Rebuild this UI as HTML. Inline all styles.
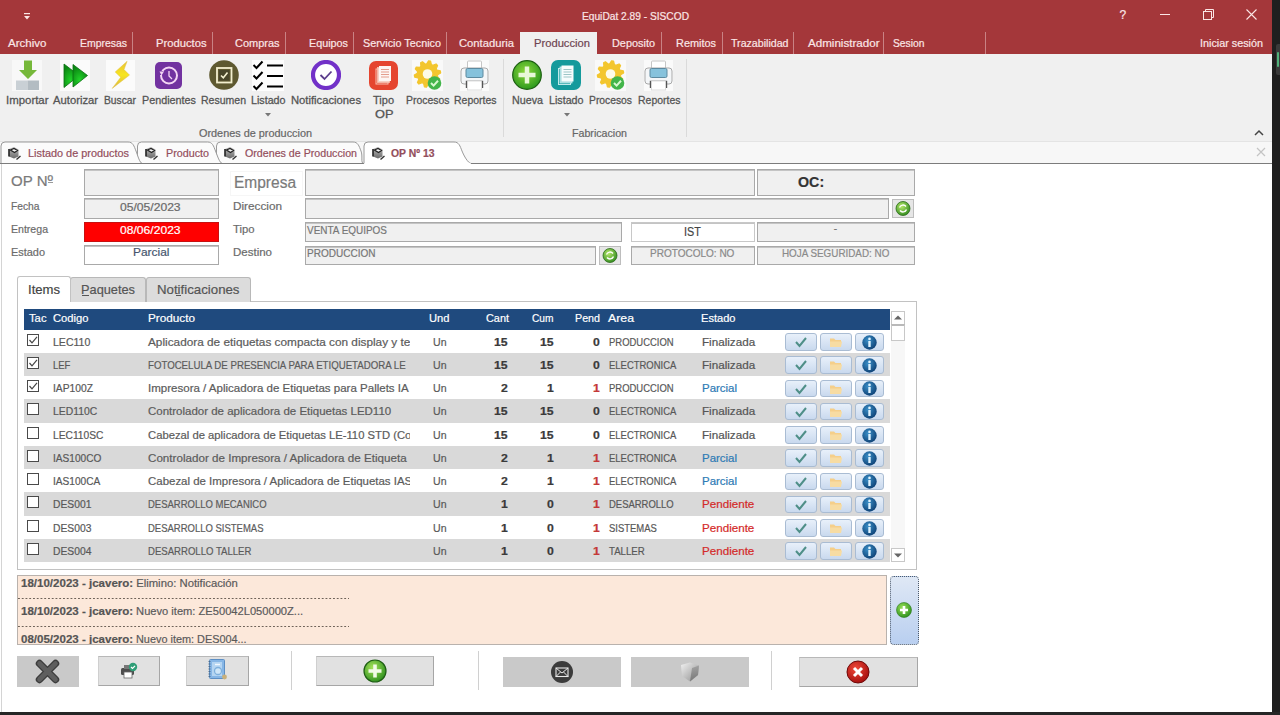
<!DOCTYPE html><html><head><meta charset="utf-8"><style>
*{margin:0;padding:0;box-sizing:border-box}
html,body{width:1280px;height:715px;overflow:hidden;background:#fff;font-family:"Liberation Sans",sans-serif}
.t{position:absolute;white-space:pre;line-height:1;-webkit-text-stroke-width:0.2px}
.a{position:absolute}
</style></head><body><div class="a" style="left:0px;top:0px;width:1272px;height:54px;background:#a4373a"></div>
<svg class="a" style="left:22px;top:11px" width="10" height="10" viewBox="0 0 10 10"><rect x="2" y="2" width="6" height="1.2" fill="#fbe6e6"/><path d="M2 5 L8 5 L5 8.5 Z" fill="#fbe6e6"/></svg>
<div class="t" style="left:582.00px;top:11.29px;font-size:11px;color:#fbe6e6;transform:scaleX(0.9260);transform-origin:0 0;">EquiDat 2.89 - SISCOD</div>
<div class="t" style="left:1119.50px;top:8.84px;font-size:12px;color:#fbe6e6;">?</div>
<div class="a" style="left:1160px;top:14px;width:10px;height:1px;background:#fbe6e6"></div>
<svg class="a" style="left:1203px;top:9px" width="11" height="11" viewBox="0 0 11 11"><rect x="0.5" y="2.5" width="8" height="8" fill="none" stroke="#fbe6e6" stroke-width="1"/><path d="M2.5 2.5 V0.5 H10.5 V8.5 H8.5" fill="none" stroke="#fbe6e6" stroke-width="1"/></svg>
<svg class="a" style="left:1246px;top:9px" width="11" height="11" viewBox="0 0 11 11"><path d="M0.5 0.5 L10.5 10.5 M10.5 0.5 L0.5 10.5" stroke="#fbe6e6" stroke-width="1.1"/></svg>
<div class="t" style="left:8.00px;top:38.27px;font-size:11.5px;color:#fbe6e6;transform:scaleX(1.0040);transform-origin:0 0;">Archivo</div>
<div class="t" style="left:80.00px;top:38.27px;font-size:11.5px;color:#fbe6e6;transform:scaleX(0.9079);transform-origin:0 0;">Empresas</div>
<div class="t" style="left:155.50px;top:38.27px;font-size:11.5px;color:#fbe6e6;transform:scaleX(0.9753);transform-origin:0 0;">Productos</div>
<div class="t" style="left:235.00px;top:38.27px;font-size:11.5px;color:#fbe6e6;transform:scaleX(0.9539);transform-origin:0 0;">Compras</div>
<div class="t" style="left:308.50px;top:38.27px;font-size:11.5px;color:#fbe6e6;transform:scaleX(0.9384);transform-origin:0 0;">Equipos</div>
<div class="t" style="left:362.50px;top:38.27px;font-size:11.5px;color:#fbe6e6;transform:scaleX(0.9411);transform-origin:0 0;">Servicio Tecnico</div>
<div class="t" style="left:458.50px;top:38.27px;font-size:11.5px;color:#fbe6e6;transform:scaleX(0.9776);transform-origin:0 0;">Contaduria</div>
<div class="t" style="left:611.50px;top:38.27px;font-size:11.5px;color:#fbe6e6;transform:scaleX(0.9474);transform-origin:0 0;">Deposito</div>
<div class="t" style="left:675.50px;top:38.27px;font-size:11.5px;color:#fbe6e6;transform:scaleX(0.9484);transform-origin:0 0;">Remitos</div>
<div class="t" style="left:730.50px;top:38.27px;font-size:11.5px;color:#fbe6e6;transform:scaleX(0.9242);transform-origin:0 0;">Trazabilidad</div>
<div class="t" style="left:807.50px;top:38.27px;font-size:11.5px;color:#fbe6e6;transform:scaleX(1.0078);transform-origin:0 0;">Administrador</div>
<div class="t" style="left:892.50px;top:38.27px;font-size:11.5px;color:#fbe6e6;transform:scaleX(0.8958);transform-origin:0 0;">Sesion</div>
<div class="t" style="left:1200.00px;top:38.27px;font-size:11.5px;color:#fbe6e6;transform:scaleX(0.9387);transform-origin:0 0;">Iniciar sesión</div>
<div class="a" style="left:132px;top:32px;width:1px;height:22px;background:#c98284"></div>
<div class="a" style="left:212px;top:32px;width:1px;height:22px;background:#c98284"></div>
<div class="a" style="left:285px;top:32px;width:1px;height:22px;background:#c98284"></div>
<div class="a" style="left:353px;top:32px;width:1px;height:22px;background:#c98284"></div>
<div class="a" style="left:446px;top:32px;width:1px;height:22px;background:#c98284"></div>
<div class="a" style="left:661px;top:32px;width:1px;height:22px;background:#c98284"></div>
<div class="a" style="left:722px;top:32px;width:1px;height:22px;background:#c98284"></div>
<div class="a" style="left:793px;top:32px;width:1px;height:22px;background:#c98284"></div>
<div class="a" style="left:883px;top:32px;width:1px;height:22px;background:#c98284"></div>
<div class="a" style="left:985px;top:32px;width:1px;height:22px;background:#c98284"></div>
<div class="a" style="left:520px;top:32px;width:77px;height:22px;background:#f0f0f0"></div>
<div class="t" style="left:534.00px;top:38.27px;font-size:11.5px;color:#6e4450;transform:scaleX(0.9733);transform-origin:0 0;">Produccion</div>
<div class="a" style="left:0px;top:54px;width:1272px;height:87px;background:#f0f0f0"></div>
<svg class="a" style="left:12px;top:60px" width="30" height="31" viewBox="0 0 30 31"><rect width="30" height="31" fill="#f8f8f8"/><path d="M12 0.5 H20 V10 H25 L16 19 L7 10 H12 Z" fill="#76b83a"/><rect x="4" y="20.5" width="11.5" height="9.5" fill="#c9d0d5"/><rect x="15.5" y="20.5" width="11.5" height="9.5" fill="#b3bcc2"/></svg>
<div class="t" style="left:5.50px;top:95.27px;font-size:11.5px;color:#555;transform:scaleX(0.9926);transform-origin:0 0;-webkit-text-stroke:0.3px #555">Importar</div>
<svg class="a" style="left:60px;top:60px" width="30" height="31" viewBox="0 0 30 31"><rect width="30" height="31" fill="#fbfbfb"/><defs><radialGradient id="ag" cx="0.45" cy="0.7" r="0.6"><stop offset="0" stop-color="#22d42a"/><stop offset="1" stop-color="#0c8a14"/></radialGradient></defs><path d="M4 4 L19 15.5 L4 27.5 Z" fill="url(#ag)" stroke="#0b6e12" stroke-width="0.8"/><path d="M13 4.5 L27.5 15.5 L13 27 Z" fill="url(#ag)" stroke="#0b6e12" stroke-width="0.8"/></svg>
<div class="t" style="left:53.00px;top:95.27px;font-size:11.5px;color:#555;transform:scaleX(0.9779);transform-origin:0 0;-webkit-text-stroke:0.3px #555">Autorizar</div>
<svg class="a" style="left:106px;top:60px" width="29" height="31" viewBox="0 0 29 31"><rect width="29" height="31" fill="#fbfbfb"/><defs><linearGradient id="bl" x1="0" y1="0" x2="0" y2="1"><stop offset="0" stop-color="#e9c23a"/><stop offset="0.5" stop-color="#f7e51e"/><stop offset="1" stop-color="#d9b445"/></linearGradient></defs><path d="M21.1 1.3 L9.2 12 L14.7 17.3 L6.2 28.4 L23.5 15.1 L18 9.6 Z" fill="url(#bl)" stroke="#e0c040" stroke-width="0.5"/></svg>
<div class="t" style="left:104.00px;top:95.27px;font-size:11.5px;color:#555;transform:scaleX(0.8941);transform-origin:0 0;-webkit-text-stroke:0.3px #555">Buscar</div>
<svg class="a" style="left:155px;top:62px" width="27" height="27" viewBox="0 0 27 27"><rect x="0" y="0" width="27" height="27" rx="5" fill="#7232a0"/><circle cx="14" cy="13.5" r="8" fill="none" stroke="#f4d6f4" stroke-width="2"/><path d="M14 9 L14 14 L17 17" fill="none" stroke="#f4d6f4" stroke-width="1.3"/><rect x="4" y="9" width="4" height="4" fill="#7232a0"/><path d="M4.5 9.5 L9 9.5 L6.5 13.5 Z" fill="#f4d6f4"/></svg>
<div class="t" style="left:142.00px;top:95.27px;font-size:11.5px;color:#555;transform:scaleX(0.9384);transform-origin:0 0;-webkit-text-stroke:0.3px #555">Pendientes</div>
<svg class="a" style="left:209px;top:60px" width="30" height="30" viewBox="0 0 30 30"><circle cx="15" cy="15" r="14.8" fill="#5e5930"/><rect x="8" y="8" width="14.5" height="14.5" fill="none" stroke="#f3efcf" stroke-width="1.8"/><rect x="10" y="10" width="10.5" height="10.5" fill="#48452a"/><path d="M12 15.5 L14.3 17.8 L18.5 12.5" fill="none" stroke="#f3efcf" stroke-width="1.6"/></svg>
<div class="t" style="left:200.50px;top:95.27px;font-size:11.5px;color:#555;transform:scaleX(0.9143);transform-origin:0 0;-webkit-text-stroke:0.3px #555">Resumen</div>
<svg class="a" style="left:252px;top:60px" width="32" height="31" viewBox="0 0 32 31"><rect width="32" height="31" fill="#fdfdfd"/><path d="M1.5 5 L4.5 8 L10.5 1.5 M1.5 15.5 L4.5 18.5 L10.5 12 M1.5 26 L4.5 29 L10.5 22.5" fill="none" stroke="#000" stroke-width="2"/><rect x="15" y="4.5" width="16" height="2" fill="#000"/><rect x="15" y="15" width="16" height="2" fill="#000"/><rect x="15" y="25.5" width="16" height="2" fill="#000"/></svg>
<div class="t" style="left:251.00px;top:95.27px;font-size:11.5px;color:#555;transform:scaleX(0.9303);transform-origin:0 0;-webkit-text-stroke:0.3px #555">Listado</div>
<svg class="a" style="left:265px;top:113px" width="6" height="4" viewBox="0 0 6 4"><path d="M0 0 H6 L3 3.5 Z" fill="#777"/></svg>
<svg class="a" style="left:311px;top:60px" width="30" height="30" viewBox="0 0 30 30"><circle cx="15" cy="15" r="13" fill="#fff" stroke="#7231c8" stroke-width="4.2"/><path d="M9.5 15 L13.5 19 L20.5 11.5" fill="none" stroke="#5b3d8c" stroke-width="1.8"/></svg>
<div class="t" style="left:291.00px;top:95.27px;font-size:11.5px;color:#555;transform:scaleX(0.9778);transform-origin:0 0;-webkit-text-stroke:0.3px #555">Notificaciones</div>
<svg class="a" style="left:369px;top:61px" width="29" height="29" viewBox="0 0 29 29"><rect width="29" height="29" rx="7" fill="#e5452f"/><rect x="7" y="8" width="12" height="15" fill="none" stroke="#f7c0b0" stroke-width="1"/><rect x="8.5" y="6.5" width="12" height="15" fill="#f6d0c4" stroke="#f7c0b0" stroke-width="0.8"/><rect x="10" y="5" width="12" height="15" fill="#fdf6f3"/><path d="M12 8.5 h8 M12 11 h8 M12 13.5 h8 M12 16 h8" stroke="#e49d8c" stroke-width="1"/></svg>
<div class="t" style="left:373.00px;top:95.27px;font-size:11.5px;color:#555;transform:scaleX(0.9570);transform-origin:0 0;-webkit-text-stroke:0.3px #555">Tipo</div>
<div class="t" style="left:374.50px;top:109.27px;font-size:11.5px;color:#555;transform:scaleX(1.1134);transform-origin:0 0;-webkit-text-stroke:0.3px #555">OP</div>
<svg class="a" style="left:412px;top:60px" width="31" height="31" viewBox="0 0 31 31"><rect width="31" height="31" fill="#f9f9f9"/><polygon points="14.70,3.83 16.54,0.84 18.58,1.16 19.40,4.58 20.83,5.30 24.07,3.96 25.54,5.43 24.20,8.67 24.92,10.10 28.34,10.92 28.66,12.96 25.67,14.80 25.42,16.38 27.70,19.05 26.75,20.90 23.26,20.62 22.12,21.76 22.40,25.25 20.55,26.20 17.88,23.92 16.30,24.17 14.46,27.16 12.42,26.84 11.60,23.42 10.17,22.70 6.93,24.04 5.46,22.57 6.80,19.33 6.08,17.90 2.66,17.08 2.34,15.04 5.33,13.20 5.58,11.62 3.30,8.95 4.25,7.10 7.74,7.38 8.88,6.24 8.60,2.75 10.45,1.80 13.12,4.08" fill="#f3c62e" stroke="#f3c62e" stroke-width="1.2" stroke-linejoin="round"/><circle cx="15.5" cy="14" r="4.8" fill="#fdfbe8"/><circle cx="22.5" cy="23" r="6.8" fill="#43b54a"/><path d="M19 23 L21.6 25.6 L26 20.8" fill="none" stroke="#d8f8d0" stroke-width="2"/></svg>
<div class="t" style="left:405.50px;top:95.27px;font-size:11.5px;color:#555;transform:scaleX(0.9074);transform-origin:0 0;-webkit-text-stroke:0.3px #555">Procesos</div>
<svg class="a" style="left:460px;top:60px" width="29" height="31" viewBox="0 0 29 31"><rect width="29" height="31" fill="#fafafa"/><rect x="7.5" y="1" width="14" height="9" rx="1" fill="#fff" stroke="#c6c6c6" stroke-width="1"/><rect x="1" y="8" width="27" height="16" rx="3" fill="#f4f6f8" stroke="#a9a9a9" stroke-width="1"/><rect x="6" y="8.5" width="17" height="9" rx="1.5" fill="#86c2dc" stroke="#5d8aa0" stroke-width="1"/><path d="M6.5 28 V21.5 H22.5 V28" fill="none" stroke="#555" stroke-width="1.4"/><rect x="7.5" y="21" width="14" height="9" fill="#fff" stroke="#d4d4d4" stroke-width="0.8"/></svg>
<div class="t" style="left:454.00px;top:95.27px;font-size:11.5px;color:#555;transform:scaleX(0.9108);transform-origin:0 0;-webkit-text-stroke:0.3px #555">Reportes</div>
<div class="a" style="left:503px;top:59px;width:1px;height:78px;background:#dadada"></div>
<div class="t" style="left:199.00px;top:128.19px;font-size:11px;color:#666;transform:scaleX(0.9882);transform-origin:0 0;">Ordenes de produccion</div>
<svg class="a" style="left:512px;top:60px" width="30" height="30" viewBox="0 0 30 30"><defs><radialGradient id="gn" cx="0.45" cy="0.4" r="0.6"><stop offset="0" stop-color="#8ed83b"/><stop offset="1" stop-color="#2e9a1e"/></radialGradient></defs><circle cx="15" cy="15" r="14.3" fill="url(#gn)" stroke="#1c5e10" stroke-width="1.2"/><path d="M15 6.5 V23.5 M6.5 15 H23.5" stroke="#e8f8d8" stroke-width="4.5"/></svg>
<div class="t" style="left:511.50px;top:95.27px;font-size:11.5px;color:#555;transform:scaleX(0.9325);transform-origin:0 0;-webkit-text-stroke:0.3px #555">Nueva</div>
<svg class="a" style="left:551px;top:60px" width="30" height="30" viewBox="0 0 30 30"><rect width="30" height="30" rx="7" fill="#149a9c"/><rect x="7.5" y="8.5" width="12" height="16" fill="none" stroke="#bfe9ea" stroke-width="1"/><rect x="9" y="7" width="12" height="16" fill="#9fd9da" stroke="#bfe9ea" stroke-width="0.8"/><rect x="10.5" y="5.5" width="12" height="16" fill="#f6fcfc"/><path d="M12.5 9.5 h8 M12.5 12 h8 M12.5 14.5 h8 M12.5 17 h8" stroke="#9cc5c6" stroke-width="1"/></svg>
<div class="t" style="left:549.00px;top:95.27px;font-size:11.5px;color:#555;transform:scaleX(0.9303);transform-origin:0 0;-webkit-text-stroke:0.3px #555">Listado</div>
<svg class="a" style="left:564px;top:113px" width="6" height="4" viewBox="0 0 6 4"><path d="M0 0 H6 L3 3.5 Z" fill="#777"/></svg>
<svg class="a" style="left:595px;top:60px" width="31" height="31" viewBox="0 0 31 31"><rect width="31" height="31" fill="#f9f9f9"/><polygon points="14.70,3.83 16.54,0.84 18.58,1.16 19.40,4.58 20.83,5.30 24.07,3.96 25.54,5.43 24.20,8.67 24.92,10.10 28.34,10.92 28.66,12.96 25.67,14.80 25.42,16.38 27.70,19.05 26.75,20.90 23.26,20.62 22.12,21.76 22.40,25.25 20.55,26.20 17.88,23.92 16.30,24.17 14.46,27.16 12.42,26.84 11.60,23.42 10.17,22.70 6.93,24.04 5.46,22.57 6.80,19.33 6.08,17.90 2.66,17.08 2.34,15.04 5.33,13.20 5.58,11.62 3.30,8.95 4.25,7.10 7.74,7.38 8.88,6.24 8.60,2.75 10.45,1.80 13.12,4.08" fill="#f3c62e" stroke="#f3c62e" stroke-width="1.2" stroke-linejoin="round"/><circle cx="15.5" cy="14" r="4.8" fill="#fdfbe8"/><circle cx="22.5" cy="23" r="6.8" fill="#43b54a"/><path d="M19 23 L21.6 25.6 L26 20.8" fill="none" stroke="#d8f8d0" stroke-width="2"/></svg>
<div class="t" style="left:589.00px;top:95.27px;font-size:11.5px;color:#555;transform:scaleX(0.8970);transform-origin:0 0;-webkit-text-stroke:0.3px #555">Procesos</div>
<svg class="a" style="left:644px;top:60px" width="29" height="31" viewBox="0 0 29 31"><rect width="29" height="31" fill="#fafafa"/><rect x="7.5" y="1" width="14" height="9" rx="1" fill="#fff" stroke="#c6c6c6" stroke-width="1"/><rect x="1" y="8" width="27" height="16" rx="3" fill="#f4f6f8" stroke="#a9a9a9" stroke-width="1"/><rect x="6" y="8.5" width="17" height="9" rx="1.5" fill="#86c2dc" stroke="#5d8aa0" stroke-width="1"/><path d="M6.5 28 V21.5 H22.5 V28" fill="none" stroke="#555" stroke-width="1.4"/><rect x="7.5" y="21" width="14" height="9" fill="#fff" stroke="#d4d4d4" stroke-width="0.8"/></svg>
<div class="t" style="left:637.50px;top:95.27px;font-size:11.5px;color:#555;transform:scaleX(0.9108);transform-origin:0 0;-webkit-text-stroke:0.3px #555">Reportes</div>
<div class="a" style="left:686px;top:59px;width:1px;height:78px;background:#dadada"></div>
<div class="t" style="left:572.00px;top:128.19px;font-size:11px;color:#666;transform:scaleX(0.9673);transform-origin:0 0;">Fabricacion</div>
<svg class="a" style="left:1254px;top:129px" width="10" height="7" viewBox="0 0 10 7"><path d="M1 6 L5 2 L9 6" fill="none" stroke="#444" stroke-width="1.5"/></svg>
<div class="a" style="left:0px;top:141px;width:1272px;height:22px;background:#f7f7f7;border-top:1px solid #e4e4e4"></div>
<div class="a" style="left:0px;top:163px;width:1272px;height:549px;background:#fff"></div>
<div class="a" style="left:1px;top:163px;width:1px;height:549px;background:#d4d4d4"></div>
<svg class="a" style="left:0px;top:0px" width="1272" height="170" viewBox="0 0 1272 170"><path d="M216.5 163.5 V146 Q216.5 142 220.5 142 H353 C358 142 359 146 361 151 S360.5 163 363.5 163.5 Z" fill="#fbfbfb" stroke="#9a9a9a" stroke-width="1"/><path d="M137.5 163.5 V146 Q137.5 142 141.5 142 H207.5 C212.5 142 213.5 146 215.5 151 S219.5 163 222.5 163.5 Z" fill="#fbfbfb" stroke="#9a9a9a" stroke-width="1"/><path d="M1 163.5 V146 Q1 142 5 142 H128 C133 142 134 146 136 151 S139.5 163 142.5 163.5 Z" fill="#fbfbfb" stroke="#9a9a9a" stroke-width="1"/><path d="M0 163.5 H364 M471 163.5 H1272" stroke="#7c7c7c" stroke-width="1.2"/><path d="M364 163.5 V146 Q364 142 368 142 H454 C459 142 460 146 462 151 S468 163 471 163.5" fill="#ffffff" stroke="#9a9a9a" stroke-width="1"/><rect x="364.6" y="163" width="106" height="2" fill="#fff"/></svg>
<svg class="a" style="left:8px;top:145.5px" width="14" height="15" viewBox="0 0 14 15"><defs><linearGradient id="dg" x1="0" y1="0" x2="0" y2="1"><stop offset="0" stop-color="#bdbdbd"/><stop offset="1" stop-color="#6a6a6a"/></linearGradient></defs><path d="M1 3 L6 1 L10.5 3.5 V10.5 L6 12.5 L1 10.5 Z" fill="url(#dg)"/><path d="M1 3 V10.5" stroke="#222" stroke-width="1.6"/><path d="M2.5 4 L6 2.5 L9.5 4.5 L6.5 6.5 Z" fill="#f4f4f4" stroke="#222" stroke-width="1.2"/><path d="M8.5 13.5 L12.5 10" stroke="#333" stroke-width="1.4"/></svg>
<div class="t" style="left:28.00px;top:147.69px;font-size:11px;color:#934e5c;transform:scaleX(0.9890);transform-origin:0 0;">Listado de productos</div>
<svg class="a" style="left:145px;top:145.5px" width="14" height="15" viewBox="0 0 14 15"><defs><linearGradient id="dg" x1="0" y1="0" x2="0" y2="1"><stop offset="0" stop-color="#bdbdbd"/><stop offset="1" stop-color="#6a6a6a"/></linearGradient></defs><path d="M1 3 L6 1 L10.5 3.5 V10.5 L6 12.5 L1 10.5 Z" fill="url(#dg)"/><path d="M1 3 V10.5" stroke="#222" stroke-width="1.6"/><path d="M2.5 4 L6 2.5 L9.5 4.5 L6.5 6.5 Z" fill="#f4f4f4" stroke="#222" stroke-width="1.2"/><path d="M8.5 13.5 L12.5 10" stroke="#333" stroke-width="1.4"/></svg>
<div class="t" style="left:165.50px;top:147.69px;font-size:11px;color:#934e5c;transform:scaleX(0.9767);transform-origin:0 0;">Producto</div>
<svg class="a" style="left:224px;top:145.5px" width="14" height="15" viewBox="0 0 14 15"><defs><linearGradient id="dg" x1="0" y1="0" x2="0" y2="1"><stop offset="0" stop-color="#bdbdbd"/><stop offset="1" stop-color="#6a6a6a"/></linearGradient></defs><path d="M1 3 L6 1 L10.5 3.5 V10.5 L6 12.5 L1 10.5 Z" fill="url(#dg)"/><path d="M1 3 V10.5" stroke="#222" stroke-width="1.6"/><path d="M2.5 4 L6 2.5 L9.5 4.5 L6.5 6.5 Z" fill="#f4f4f4" stroke="#222" stroke-width="1.2"/><path d="M8.5 13.5 L12.5 10" stroke="#333" stroke-width="1.4"/></svg>
<div class="t" style="left:244.50px;top:147.69px;font-size:11px;color:#934e5c;transform:scaleX(0.9691);transform-origin:0 0;">Ordenes de Produccion</div>
<svg class="a" style="left:372px;top:145.5px" width="14" height="15" viewBox="0 0 14 15"><defs><linearGradient id="dg" x1="0" y1="0" x2="0" y2="1"><stop offset="0" stop-color="#bdbdbd"/><stop offset="1" stop-color="#6a6a6a"/></linearGradient></defs><path d="M1 3 L6 1 L10.5 3.5 V10.5 L6 12.5 L1 10.5 Z" fill="url(#dg)"/><path d="M1 3 V10.5" stroke="#222" stroke-width="1.6"/><path d="M2.5 4 L6 2.5 L9.5 4.5 L6.5 6.5 Z" fill="#f4f4f4" stroke="#222" stroke-width="1.2"/><path d="M8.5 13.5 L12.5 10" stroke="#333" stroke-width="1.4"/></svg>
<div class="t" style="left:391.00px;top:147.69px;font-size:11px;color:#934e5c;font-weight:bold;transform:scaleX(0.9456);transform-origin:0 0;">OP Nº 13</div>
<svg class="a" style="left:1256px;top:147px" width="10" height="10" viewBox="0 0 10 10"><path d="M1 1 L9 9 M9 1 L1 9" stroke="#c4c4c4" stroke-width="1.2"/></svg>
<div class="t" style="left:11.00px;top:173.30px;font-size:15px;color:#7a7a7a;transform:scaleX(1.0029);transform-origin:0 0;">OP Nº</div>
<div class="a" style="left:48px;top:182px;width:5px;height:1.3px;background:#9a9a9a"></div>
<div class="a" style="left:84px;top:169px;width:135px;height:26.5px;background:#f0f0f0;border:1px solid #a9a9a9;box-shadow:inset 0 1px 0 #c4c4c4"></div>
<div class="t" style="left:11.00px;top:200.69px;font-size:11px;color:#6b6b6b;transform:scaleX(0.9322);transform-origin:0 0;">Fecha</div>
<div class="a" style="left:84px;top:198px;width:135px;height:21px;background:#f0f0f0;border:1px solid #a9a9a9;box-shadow:inset 0 1px 0 #c4c4c4"></div>
<div class="t" style="left:120.40px;top:201.69px;font-size:11px;color:#6a6a6a;transform:scaleX(1.1007);transform-origin:0 0;">05/05/2023</div>
<div class="t" style="left:11.00px;top:223.69px;font-size:11px;color:#6b6b6b;transform:scaleX(0.9604);transform-origin:0 0;">Entrega</div>
<div class="a" style="left:84px;top:222px;width:135px;height:20px;background:#f00;border:1px solid #c81010"></div>
<div class="t" style="left:120.40px;top:224.89px;font-size:11px;color:#fff;transform:scaleX(1.1007);transform-origin:0 0;">08/06/2023</div>
<div class="t" style="left:11.00px;top:247.19px;font-size:11px;color:#6b6b6b;transform:scaleX(0.9928);transform-origin:0 0;">Estado</div>
<div class="a" style="left:84px;top:245px;width:135px;height:20px;background:#fff;border:1px solid #a9a9a9;box-shadow:inset 0 1px 0 #c4c4c4"></div>
<div class="t" style="left:132.80px;top:247.27px;font-size:11.5px;color:#46566e;transform:scaleX(1.0384);transform-origin:0 0;">Parcial</div>
<div class="a" style="left:230px;top:171px;width:73px;height:25px;border:1px solid #f6f6f6"></div>
<div class="t" style="left:233.50px;top:174.96px;font-size:16px;color:#7a7a7a;transform:scaleX(0.9684);transform-origin:0 0;">Empresa</div>
<div class="a" style="left:305px;top:169px;width:450px;height:26.5px;background:#f0f0f0;border:1px solid #a9a9a9;box-shadow:inset 0 1px 0 #c4c4c4"></div>
<div class="a" style="left:757px;top:169px;width:158px;height:26.5px;background:#f0f0f0;border:1px solid #a9a9a9;box-shadow:inset 0 1px 0 #c4c4c4"></div>
<div class="t" style="left:797.94px;top:174.30px;font-size:15px;color:#333;font-weight:bold;transform:scaleX(0.9500);transform-origin:0 0;">OC:</div>
<div class="t" style="left:232.50px;top:200.69px;font-size:11px;color:#6b6b6b;transform:scaleX(1.0687);transform-origin:0 0;">Direccion</div>
<div class="a" style="left:305px;top:198px;width:584px;height:20.5px;background:#f0f0f0;border:1px solid #a9a9a9;box-shadow:inset 0 1px 0 #c4c4c4"></div>
<div class="t" style="left:232.50px;top:223.69px;font-size:11px;color:#6b6b6b;transform:scaleX(1.0243);transform-origin:0 0;">Tipo</div>
<div class="a" style="left:305px;top:222px;width:317px;height:20px;background:#f0f0f0;border:1px solid #a9a9a9;box-shadow:inset 0 1px 0 #c4c4c4"></div>
<div class="t" style="left:306.50px;top:224.61px;font-size:10.5px;color:#777;transform:scaleX(0.9477);transform-origin:0 0;">VENTA EQUIPOS</div>
<div class="a" style="left:631px;top:222px;width:123.5px;height:19.5px;background:#fff;border:1px solid #c8c8c8;box-shadow:inset 0 1px 0 #c4c4c4"></div>
<div class="t" style="left:684.10px;top:225.84px;font-size:12px;color:#444;transform:scaleX(0.9000);transform-origin:0 0;">IST</div>
<div class="a" style="left:757px;top:222px;width:158px;height:20px;background:#f0f0f0;border:1px solid #a9a9a9;box-shadow:inset 0 1px 0 #c4c4c4"></div>
<div class="t" style="left:833.83px;top:223.53px;font-size:10px;color:#777;transform:scaleX(1.0000);transform-origin:0 0;">-</div>
<div class="t" style="left:232.50px;top:247.19px;font-size:11px;color:#6b6b6b;transform:scaleX(1.0457);transform-origin:0 0;">Destino</div>
<div class="a" style="left:305px;top:245.5px;width:290.5px;height:19.5px;background:#f0f0f0;border:1px solid #a9a9a9;box-shadow:inset 0 1px 0 #c4c4c4"></div>
<div class="t" style="left:306.50px;top:248.11px;font-size:10.5px;color:#777;transform:scaleX(0.9547);transform-origin:0 0;">PRODUCCION</div>
<div class="a" style="left:631px;top:245.5px;width:123.5px;height:19.5px;background:#f0f0f0;border:1px solid #a9a9a9;box-shadow:inset 0 1px 0 #c4c4c4"></div>
<div class="t" style="left:650.30px;top:247.61px;font-size:10.5px;color:#8a8a8a;transform:scaleX(0.9538);transform-origin:0 0;">PROTOCOLO: NO</div>
<div class="a" style="left:757px;top:245.5px;width:158px;height:19.5px;background:#f0f0f0;border:1px solid #a9a9a9;box-shadow:inset 0 1px 0 #c4c4c4"></div>
<div class="t" style="left:782.00px;top:247.61px;font-size:10.5px;color:#8a8a8a;transform:scaleX(0.9383);transform-origin:0 0;">HOJA SEGURIDAD: NO</div>
<svg class="a" style="left:892px;top:199px" width="22" height="19" viewBox="0 0 22 19"><rect x="0.5" y="0.5" width="21" height="18" fill="#e6e6e6" stroke="#bdbdbd"/><defs><radialGradient id="rg" cx="0.4" cy="0.35" r="0.7"><stop offset="0" stop-color="#b6e86a"/><stop offset="1" stop-color="#2f8a1e"/></radialGradient></defs><circle cx="11" cy="9.5" r="7" fill="url(#rg)" stroke="#2b6b1a" stroke-width="0.8"/><path d="M7.5 8.5 A3.8 3.8 0 0 1 14 7.5 M14.5 10.5 A3.8 3.8 0 0 1 8 11.5" fill="none" stroke="#fff" stroke-width="1.4"/></svg>
<svg class="a" style="left:599px;top:246px" width="22" height="19" viewBox="0 0 22 19"><rect x="0.5" y="0.5" width="21" height="18" fill="#e6e6e6" stroke="#bdbdbd"/><defs><radialGradient id="rg" cx="0.4" cy="0.35" r="0.7"><stop offset="0" stop-color="#b6e86a"/><stop offset="1" stop-color="#2f8a1e"/></radialGradient></defs><circle cx="11" cy="9.5" r="7" fill="url(#rg)" stroke="#2b6b1a" stroke-width="0.8"/><path d="M7.5 8.5 A3.8 3.8 0 0 1 14 7.5 M14.5 10.5 A3.8 3.8 0 0 1 8 11.5" fill="none" stroke="#fff" stroke-width="1.4"/></svg>
<div class="a" style="left:16.5px;top:301px;width:900.5px;height:268.5px;border:1px solid #c2c2c2;background:#fff"></div>
<div class="a" style="left:70px;top:277px;width:76px;height:25px;background:#dcdcdc;border:1px solid #b8b8b8;border-bottom:none;border-radius:3px 3px 0 0"></div>
<div class="a" style="left:146px;top:277px;width:105px;height:25px;background:#dcdcdc;border:1px solid #b8b8b8;border-bottom:none;border-radius:3px 3px 0 0"></div>
<div class="a" style="left:16.5px;top:276px;width:54px;height:26px;background:#fff;border:1px solid #c2c2c2;border-bottom:none;border-radius:3px 3px 0 0"></div>
<div class="t" style="left:27.50px;top:282.50px;font-size:13px;color:#444;transform:scaleX(1.0068);transform-origin:0 0;">Items</div>
<div class="t" style="left:81.00px;top:283.00px;font-size:13px;color:#555;transform:scaleX(0.9830);transform-origin:0 0;">Paquetes</div>
<div class="a" style="left:81.5px;top:294.8px;width:7.5px;height:1px;background:#555"></div>
<div class="t" style="left:157.00px;top:283.00px;font-size:13px;color:#555;transform:scaleX(1.0194);transform-origin:0 0;">Notificaciones</div>
<div class="a" style="left:176px;top:294.8px;width:4.5px;height:1px;background:#555"></div>
<div class="a" style="left:24px;top:309px;width:866px;height:20.5px;background:#1f4a7e"></div>
<div class="t" style="left:29.00px;top:312.77px;font-size:11.5px;color:#ffffff;transform:scaleX(0.9779);transform-origin:0 0;">Tac</div>
<div class="t" style="left:52.50px;top:312.77px;font-size:11.5px;color:#ffffff;transform:scaleX(0.9741);transform-origin:0 0;">Codigo</div>
<div class="t" style="left:147.50px;top:312.77px;font-size:11.5px;color:#ffffff;transform:scaleX(1.0211);transform-origin:0 0;">Producto</div>
<div class="t" style="left:428.50px;top:312.77px;font-size:11.5px;color:#ffffff;transform:scaleX(0.9717);transform-origin:0 0;">Und</div>
<div class="t" style="left:485.50px;top:312.77px;font-size:11.5px;color:#ffffff;transform:scaleX(0.9468);transform-origin:0 0;">Cant</div>
<div class="t" style="left:532.00px;top:312.77px;font-size:11.5px;color:#ffffff;transform:scaleX(0.8855);transform-origin:0 0;">Cum</div>
<div class="t" style="left:575.00px;top:312.77px;font-size:11.5px;color:#ffffff;transform:scaleX(0.9308);transform-origin:0 0;">Pend</div>
<div class="t" style="left:607.50px;top:312.77px;font-size:11.5px;color:#ffffff;transform:scaleX(1.0703);transform-origin:0 0;">Area</div>
<div class="t" style="left:700.50px;top:312.77px;font-size:11.5px;color:#ffffff;transform:scaleX(0.9636);transform-origin:0 0;">Estado</div>
<div class="a" style="left:0;top:0;width:1280px;height:715px;overflow:hidden">
<div class="a" style="left:27px;top:333.5px;width:12px;height:12px;border:1.3px solid #4a4a4a;background:#fff"></div>
<svg class="a" style="left:28px;top:334.5px" width="10" height="10" viewBox="0 0 10 10"><path d="M1.5 5 L4 7.8 L9 1.8" fill="none" stroke="#444" stroke-width="1.2"/></svg>
<div class="t" style="left:53.00px;top:336.70px;font-size:10.75px;color:#585858;transform:scaleX(0.9804);transform-origin:0 0;">LEC110</div>
<div class="a" style="left:147px;top:329.50px;width:263px;height:23.25px;overflow:hidden">
<div class="t" style="left:1px;top:7.20px;font-size:10.75px;color:#5c5c5c;transform:scaleX(1.0975);transform-origin:0 0">Aplicadora de etiquetas compacta con display y tec</div>
</div>
<div class="t" style="left:432.50px;top:336.70px;font-size:10.75px;color:#585858;transform:scaleX(0.9824);transform-origin:0 0;">Un</div>
<div class="t" style="left:494.39px;top:336.70px;font-size:10.75px;color:#3a3a3a;font-weight:bold;transform:scaleX(1.1383);transform-origin:0 0;">15</div>
<div class="t" style="left:539.89px;top:336.70px;font-size:10.75px;color:#3a3a3a;font-weight:bold;transform:scaleX(1.1383);transform-origin:0 0;">15</div>
<div class="t" style="left:592.69px;top:336.70px;font-size:10.75px;color:#3a3a3a;font-weight:bold;transform:scaleX(1.1383);transform-origin:0 0;">0</div>
<div class="t" style="left:608.50px;top:336.70px;font-size:10.75px;color:#585858;transform:scaleX(0.8800);transform-origin:0 0;">PRODUCCION</div>
<div class="t" style="left:702.00px;top:336.70px;font-size:10.75px;color:#555;transform:scaleX(1.0838);transform-origin:0 0;">Finalizada</div>
<div class="a" style="left:784.5px;top:333.0px;width:32.0px;height:17.5px;border:1px solid #a9bcd3;border-radius:3px;background:linear-gradient(#e8f0fa,#c9d9ee)"></div>
<div class="a" style="left:820px;top:333.0px;width:32px;height:17.5px;border:1px solid #a9bcd3;border-radius:3px;background:linear-gradient(#e8f0fa,#c9d9ee)"></div>
<div class="a" style="left:855px;top:333.0px;width:29px;height:17.5px;border:1px solid #a9bcd3;border-radius:3px;background:linear-gradient(#e8f0fa,#c9d9ee)"></div>
<svg class="a" style="left:794px;top:335.0px" width="14" height="14" viewBox="0 0 14 14"><path d="M2 7 L5.5 11 L12 3" fill="none" stroke="#4f8f88" stroke-width="2"/></svg>
<svg class="a" style="left:829px;top:336.0px" width="14" height="12" viewBox="0 0 14 12"><path d="M1 2.5 H5 L6.5 4 H12 V11 H1 Z" fill="#f5cf8a"/><path d="M1 5.5 H13 L12 11 H1 Z" fill="#f7dca3"/></svg>
<svg class="a" style="left:862px;top:334.5px" width="15" height="15" viewBox="0 0 15 15"><defs><radialGradient id="ib" cx="0.4" cy="0.35" r="0.7"><stop offset="0" stop-color="#3a8fc8"/><stop offset="1" stop-color="#0d3f73"/></radialGradient></defs><circle cx="7.5" cy="7.5" r="7.2" fill="url(#ib)"/><rect x="6.3" y="6" width="2.4" height="6" fill="#dff3ff"/><circle cx="7.5" cy="3.9" r="1.3" fill="#dff3ff"/></svg>
<div class="a" style="left:24px;top:352.75px;width:866px;height:23.25px;background:#d9d9d9"></div>
<div class="a" style="left:27px;top:356.75px;width:12px;height:12px;border:1.3px solid #4a4a4a;background:#fff"></div>
<svg class="a" style="left:28px;top:357.75px" width="10" height="10" viewBox="0 0 10 10"><path d="M1.5 5 L4 7.8 L9 1.8" fill="none" stroke="#444" stroke-width="1.2"/></svg>
<div class="t" style="left:53.00px;top:359.95px;font-size:10.75px;color:#585858;transform:scaleX(0.8800);transform-origin:0 0;">LEF</div>
<div class="a" style="left:147px;top:352.75px;width:263px;height:23.25px;overflow:hidden">
<div class="t" style="left:1px;top:7.20px;font-size:10.75px;color:#5c5c5c;transform:scaleX(0.8984);transform-origin:0 0">FOTOCELULA DE PRESENCIA PARA ETIQUETADORA LE</div>
</div>
<div class="t" style="left:432.50px;top:359.95px;font-size:10.75px;color:#585858;transform:scaleX(0.9824);transform-origin:0 0;">Un</div>
<div class="t" style="left:494.39px;top:359.95px;font-size:10.75px;color:#3a3a3a;font-weight:bold;transform:scaleX(1.1383);transform-origin:0 0;">15</div>
<div class="t" style="left:539.89px;top:359.95px;font-size:10.75px;color:#3a3a3a;font-weight:bold;transform:scaleX(1.1383);transform-origin:0 0;">15</div>
<div class="t" style="left:592.69px;top:359.95px;font-size:10.75px;color:#3a3a3a;font-weight:bold;transform:scaleX(1.1383);transform-origin:0 0;">0</div>
<div class="t" style="left:608.50px;top:359.95px;font-size:10.75px;color:#585858;transform:scaleX(0.8800);transform-origin:0 0;">ELECTRONICA</div>
<div class="t" style="left:702.00px;top:359.95px;font-size:10.75px;color:#555;transform:scaleX(1.0838);transform-origin:0 0;">Finalizada</div>
<div class="a" style="left:784.5px;top:356.25px;width:32.0px;height:17.5px;border:1px solid #a9bcd3;border-radius:3px;background:linear-gradient(#e8f0fa,#c9d9ee)"></div>
<div class="a" style="left:820px;top:356.25px;width:32px;height:17.5px;border:1px solid #a9bcd3;border-radius:3px;background:linear-gradient(#e8f0fa,#c9d9ee)"></div>
<div class="a" style="left:855px;top:356.25px;width:29px;height:17.5px;border:1px solid #a9bcd3;border-radius:3px;background:linear-gradient(#e8f0fa,#c9d9ee)"></div>
<svg class="a" style="left:794px;top:358.25px" width="14" height="14" viewBox="0 0 14 14"><path d="M2 7 L5.5 11 L12 3" fill="none" stroke="#4f8f88" stroke-width="2"/></svg>
<svg class="a" style="left:829px;top:359.25px" width="14" height="12" viewBox="0 0 14 12"><path d="M1 2.5 H5 L6.5 4 H12 V11 H1 Z" fill="#f5cf8a"/><path d="M1 5.5 H13 L12 11 H1 Z" fill="#f7dca3"/></svg>
<svg class="a" style="left:862px;top:357.75px" width="15" height="15" viewBox="0 0 15 15"><defs><radialGradient id="ib" cx="0.4" cy="0.35" r="0.7"><stop offset="0" stop-color="#3a8fc8"/><stop offset="1" stop-color="#0d3f73"/></radialGradient></defs><circle cx="7.5" cy="7.5" r="7.2" fill="url(#ib)"/><rect x="6.3" y="6" width="2.4" height="6" fill="#dff3ff"/><circle cx="7.5" cy="3.9" r="1.3" fill="#dff3ff"/></svg>
<div class="a" style="left:27px;top:380.0px;width:12px;height:12px;border:1.3px solid #4a4a4a;background:#fff"></div>
<svg class="a" style="left:28px;top:381.0px" width="10" height="10" viewBox="0 0 10 10"><path d="M1.5 5 L4 7.8 L9 1.8" fill="none" stroke="#444" stroke-width="1.2"/></svg>
<div class="t" style="left:53.00px;top:383.20px;font-size:10.75px;color:#585858;transform:scaleX(0.9546);transform-origin:0 0;">IAP100Z</div>
<div class="a" style="left:147px;top:376.00px;width:263px;height:23.25px;overflow:hidden">
<div class="t" style="left:1px;top:7.20px;font-size:10.75px;color:#5c5c5c;transform:scaleX(1.0720);transform-origin:0 0">Impresora / Aplicadora de Etiquetas para Pallets IA</div>
</div>
<div class="t" style="left:432.50px;top:383.20px;font-size:10.75px;color:#585858;transform:scaleX(0.9824);transform-origin:0 0;">Un</div>
<div class="t" style="left:501.19px;top:383.20px;font-size:10.75px;color:#3a3a3a;font-weight:bold;transform:scaleX(1.1383);transform-origin:0 0;">2</div>
<div class="t" style="left:546.69px;top:383.20px;font-size:10.75px;color:#3a3a3a;font-weight:bold;transform:scaleX(1.1383);transform-origin:0 0;">1</div>
<div class="t" style="left:592.69px;top:383.20px;font-size:10.75px;color:#c43838;font-weight:bold;transform:scaleX(1.1383);transform-origin:0 0;">1</div>
<div class="t" style="left:608.50px;top:383.20px;font-size:10.75px;color:#585858;transform:scaleX(0.8800);transform-origin:0 0;">PRODUCCION</div>
<div class="t" style="left:702.00px;top:383.20px;font-size:10.75px;color:#2e7bb5;transform:scaleX(1.0640);transform-origin:0 0;">Parcial</div>
<div class="a" style="left:784.5px;top:379.5px;width:32.0px;height:17.5px;border:1px solid #a9bcd3;border-radius:3px;background:linear-gradient(#e8f0fa,#c9d9ee)"></div>
<div class="a" style="left:820px;top:379.5px;width:32px;height:17.5px;border:1px solid #a9bcd3;border-radius:3px;background:linear-gradient(#e8f0fa,#c9d9ee)"></div>
<div class="a" style="left:855px;top:379.5px;width:29px;height:17.5px;border:1px solid #a9bcd3;border-radius:3px;background:linear-gradient(#e8f0fa,#c9d9ee)"></div>
<svg class="a" style="left:794px;top:381.5px" width="14" height="14" viewBox="0 0 14 14"><path d="M2 7 L5.5 11 L12 3" fill="none" stroke="#4f8f88" stroke-width="2"/></svg>
<svg class="a" style="left:829px;top:382.5px" width="14" height="12" viewBox="0 0 14 12"><path d="M1 2.5 H5 L6.5 4 H12 V11 H1 Z" fill="#f5cf8a"/><path d="M1 5.5 H13 L12 11 H1 Z" fill="#f7dca3"/></svg>
<svg class="a" style="left:862px;top:381.0px" width="15" height="15" viewBox="0 0 15 15"><defs><radialGradient id="ib" cx="0.4" cy="0.35" r="0.7"><stop offset="0" stop-color="#3a8fc8"/><stop offset="1" stop-color="#0d3f73"/></radialGradient></defs><circle cx="7.5" cy="7.5" r="7.2" fill="url(#ib)"/><rect x="6.3" y="6" width="2.4" height="6" fill="#dff3ff"/><circle cx="7.5" cy="3.9" r="1.3" fill="#dff3ff"/></svg>
<div class="a" style="left:24px;top:399.25px;width:866px;height:23.25px;background:#d9d9d9"></div>
<div class="a" style="left:27px;top:403.25px;width:12px;height:12px;border:1.3px solid #4a4a4a;background:#fff"></div>
<div class="t" style="left:53.00px;top:406.45px;font-size:10.75px;color:#585858;transform:scaleX(0.9634);transform-origin:0 0;">LED110C</div>
<div class="a" style="left:147px;top:399.25px;width:263px;height:23.25px;overflow:hidden">
<div class="t" style="left:1px;top:7.20px;font-size:10.75px;color:#5c5c5c;transform:scaleX(1.0689);transform-origin:0 0">Controlador de aplicadora de Etiquetas LED110</div>
</div>
<div class="t" style="left:432.50px;top:406.45px;font-size:10.75px;color:#585858;transform:scaleX(0.9824);transform-origin:0 0;">Un</div>
<div class="t" style="left:494.39px;top:406.45px;font-size:10.75px;color:#3a3a3a;font-weight:bold;transform:scaleX(1.1383);transform-origin:0 0;">15</div>
<div class="t" style="left:539.89px;top:406.45px;font-size:10.75px;color:#3a3a3a;font-weight:bold;transform:scaleX(1.1383);transform-origin:0 0;">15</div>
<div class="t" style="left:592.69px;top:406.45px;font-size:10.75px;color:#3a3a3a;font-weight:bold;transform:scaleX(1.1383);transform-origin:0 0;">0</div>
<div class="t" style="left:608.50px;top:406.45px;font-size:10.75px;color:#585858;transform:scaleX(0.8800);transform-origin:0 0;">ELECTRONICA</div>
<div class="t" style="left:702.00px;top:406.45px;font-size:10.75px;color:#555;transform:scaleX(1.0838);transform-origin:0 0;">Finalizada</div>
<div class="a" style="left:784.5px;top:402.75px;width:32.0px;height:17.5px;border:1px solid #a9bcd3;border-radius:3px;background:linear-gradient(#e8f0fa,#c9d9ee)"></div>
<div class="a" style="left:820px;top:402.75px;width:32px;height:17.5px;border:1px solid #a9bcd3;border-radius:3px;background:linear-gradient(#e8f0fa,#c9d9ee)"></div>
<div class="a" style="left:855px;top:402.75px;width:29px;height:17.5px;border:1px solid #a9bcd3;border-radius:3px;background:linear-gradient(#e8f0fa,#c9d9ee)"></div>
<svg class="a" style="left:794px;top:404.75px" width="14" height="14" viewBox="0 0 14 14"><path d="M2 7 L5.5 11 L12 3" fill="none" stroke="#4f8f88" stroke-width="2"/></svg>
<svg class="a" style="left:829px;top:405.75px" width="14" height="12" viewBox="0 0 14 12"><path d="M1 2.5 H5 L6.5 4 H12 V11 H1 Z" fill="#f5cf8a"/><path d="M1 5.5 H13 L12 11 H1 Z" fill="#f7dca3"/></svg>
<svg class="a" style="left:862px;top:404.25px" width="15" height="15" viewBox="0 0 15 15"><defs><radialGradient id="ib" cx="0.4" cy="0.35" r="0.7"><stop offset="0" stop-color="#3a8fc8"/><stop offset="1" stop-color="#0d3f73"/></radialGradient></defs><circle cx="7.5" cy="7.5" r="7.2" fill="url(#ib)"/><rect x="6.3" y="6" width="2.4" height="6" fill="#dff3ff"/><circle cx="7.5" cy="3.9" r="1.3" fill="#dff3ff"/></svg>
<div class="a" style="left:27px;top:426.5px;width:12px;height:12px;border:1.3px solid #4a4a4a;background:#fff"></div>
<div class="t" style="left:53.00px;top:429.70px;font-size:10.75px;color:#585858;transform:scaleX(0.9521);transform-origin:0 0;">LEC110SC</div>
<div class="a" style="left:147px;top:422.50px;width:263px;height:23.25px;overflow:hidden">
<div class="t" style="left:1px;top:7.20px;font-size:10.75px;color:#5c5c5c;transform:scaleX(1.0475);transform-origin:0 0">Cabezal de aplicadora de Etiquetas LE-110 STD (Cor</div>
</div>
<div class="t" style="left:432.50px;top:429.70px;font-size:10.75px;color:#585858;transform:scaleX(0.9824);transform-origin:0 0;">Un</div>
<div class="t" style="left:494.39px;top:429.70px;font-size:10.75px;color:#3a3a3a;font-weight:bold;transform:scaleX(1.1383);transform-origin:0 0;">15</div>
<div class="t" style="left:539.89px;top:429.70px;font-size:10.75px;color:#3a3a3a;font-weight:bold;transform:scaleX(1.1383);transform-origin:0 0;">15</div>
<div class="t" style="left:592.69px;top:429.70px;font-size:10.75px;color:#3a3a3a;font-weight:bold;transform:scaleX(1.1383);transform-origin:0 0;">0</div>
<div class="t" style="left:608.50px;top:429.70px;font-size:10.75px;color:#585858;transform:scaleX(0.8800);transform-origin:0 0;">ELECTRONICA</div>
<div class="t" style="left:702.00px;top:429.70px;font-size:10.75px;color:#555;transform:scaleX(1.0838);transform-origin:0 0;">Finalizada</div>
<div class="a" style="left:784.5px;top:426.0px;width:32.0px;height:17.5px;border:1px solid #a9bcd3;border-radius:3px;background:linear-gradient(#e8f0fa,#c9d9ee)"></div>
<div class="a" style="left:820px;top:426.0px;width:32px;height:17.5px;border:1px solid #a9bcd3;border-radius:3px;background:linear-gradient(#e8f0fa,#c9d9ee)"></div>
<div class="a" style="left:855px;top:426.0px;width:29px;height:17.5px;border:1px solid #a9bcd3;border-radius:3px;background:linear-gradient(#e8f0fa,#c9d9ee)"></div>
<svg class="a" style="left:794px;top:428.0px" width="14" height="14" viewBox="0 0 14 14"><path d="M2 7 L5.5 11 L12 3" fill="none" stroke="#4f8f88" stroke-width="2"/></svg>
<svg class="a" style="left:829px;top:429.0px" width="14" height="12" viewBox="0 0 14 12"><path d="M1 2.5 H5 L6.5 4 H12 V11 H1 Z" fill="#f5cf8a"/><path d="M1 5.5 H13 L12 11 H1 Z" fill="#f7dca3"/></svg>
<svg class="a" style="left:862px;top:427.5px" width="15" height="15" viewBox="0 0 15 15"><defs><radialGradient id="ib" cx="0.4" cy="0.35" r="0.7"><stop offset="0" stop-color="#3a8fc8"/><stop offset="1" stop-color="#0d3f73"/></radialGradient></defs><circle cx="7.5" cy="7.5" r="7.2" fill="url(#ib)"/><rect x="6.3" y="6" width="2.4" height="6" fill="#dff3ff"/><circle cx="7.5" cy="3.9" r="1.3" fill="#dff3ff"/></svg>
<div class="a" style="left:24px;top:445.75px;width:866px;height:23.25px;background:#d9d9d9"></div>
<div class="a" style="left:27px;top:449.75px;width:12px;height:12px;border:1.3px solid #4a4a4a;background:#fff"></div>
<div class="t" style="left:53.00px;top:452.95px;font-size:10.75px;color:#585858;transform:scaleX(0.9407);transform-origin:0 0;">IAS100CO</div>
<div class="a" style="left:147px;top:445.75px;width:263px;height:23.25px;overflow:hidden">
<div class="t" style="left:1px;top:7.20px;font-size:10.75px;color:#5c5c5c;transform:scaleX(1.0822);transform-origin:0 0">Controlador de Impresora / Aplicadora de Etiqueta</div>
</div>
<div class="t" style="left:432.50px;top:452.95px;font-size:10.75px;color:#585858;transform:scaleX(0.9824);transform-origin:0 0;">Un</div>
<div class="t" style="left:501.19px;top:452.95px;font-size:10.75px;color:#3a3a3a;font-weight:bold;transform:scaleX(1.1383);transform-origin:0 0;">2</div>
<div class="t" style="left:546.69px;top:452.95px;font-size:10.75px;color:#3a3a3a;font-weight:bold;transform:scaleX(1.1383);transform-origin:0 0;">1</div>
<div class="t" style="left:592.69px;top:452.95px;font-size:10.75px;color:#c43838;font-weight:bold;transform:scaleX(1.1383);transform-origin:0 0;">1</div>
<div class="t" style="left:608.50px;top:452.95px;font-size:10.75px;color:#585858;transform:scaleX(0.8800);transform-origin:0 0;">ELECTRONICA</div>
<div class="t" style="left:702.00px;top:452.95px;font-size:10.75px;color:#2e7bb5;transform:scaleX(1.0640);transform-origin:0 0;">Parcial</div>
<div class="a" style="left:784.5px;top:449.25px;width:32.0px;height:17.5px;border:1px solid #a9bcd3;border-radius:3px;background:linear-gradient(#e8f0fa,#c9d9ee)"></div>
<div class="a" style="left:820px;top:449.25px;width:32px;height:17.5px;border:1px solid #a9bcd3;border-radius:3px;background:linear-gradient(#e8f0fa,#c9d9ee)"></div>
<div class="a" style="left:855px;top:449.25px;width:29px;height:17.5px;border:1px solid #a9bcd3;border-radius:3px;background:linear-gradient(#e8f0fa,#c9d9ee)"></div>
<svg class="a" style="left:794px;top:451.25px" width="14" height="14" viewBox="0 0 14 14"><path d="M2 7 L5.5 11 L12 3" fill="none" stroke="#4f8f88" stroke-width="2"/></svg>
<svg class="a" style="left:829px;top:452.25px" width="14" height="12" viewBox="0 0 14 12"><path d="M1 2.5 H5 L6.5 4 H12 V11 H1 Z" fill="#f5cf8a"/><path d="M1 5.5 H13 L12 11 H1 Z" fill="#f7dca3"/></svg>
<svg class="a" style="left:862px;top:450.75px" width="15" height="15" viewBox="0 0 15 15"><defs><radialGradient id="ib" cx="0.4" cy="0.35" r="0.7"><stop offset="0" stop-color="#3a8fc8"/><stop offset="1" stop-color="#0d3f73"/></radialGradient></defs><circle cx="7.5" cy="7.5" r="7.2" fill="url(#ib)"/><rect x="6.3" y="6" width="2.4" height="6" fill="#dff3ff"/><circle cx="7.5" cy="3.9" r="1.3" fill="#dff3ff"/></svg>
<div class="a" style="left:27px;top:473.0px;width:12px;height:12px;border:1.3px solid #4a4a4a;background:#fff"></div>
<div class="t" style="left:53.00px;top:476.20px;font-size:10.75px;color:#585858;transform:scaleX(0.9422);transform-origin:0 0;">IAS100CA</div>
<div class="a" style="left:147px;top:469.00px;width:263px;height:23.25px;overflow:hidden">
<div class="t" style="left:1px;top:7.20px;font-size:10.75px;color:#5c5c5c;transform:scaleX(1.0654);transform-origin:0 0">Cabezal de Impresora / Aplicadora de Etiquetas IAS</div>
</div>
<div class="t" style="left:432.50px;top:476.20px;font-size:10.75px;color:#585858;transform:scaleX(0.9824);transform-origin:0 0;">Un</div>
<div class="t" style="left:501.19px;top:476.20px;font-size:10.75px;color:#3a3a3a;font-weight:bold;transform:scaleX(1.1383);transform-origin:0 0;">2</div>
<div class="t" style="left:546.69px;top:476.20px;font-size:10.75px;color:#3a3a3a;font-weight:bold;transform:scaleX(1.1383);transform-origin:0 0;">1</div>
<div class="t" style="left:592.69px;top:476.20px;font-size:10.75px;color:#c43838;font-weight:bold;transform:scaleX(1.1383);transform-origin:0 0;">1</div>
<div class="t" style="left:608.50px;top:476.20px;font-size:10.75px;color:#585858;transform:scaleX(0.8800);transform-origin:0 0;">ELECTRONICA</div>
<div class="t" style="left:702.00px;top:476.20px;font-size:10.75px;color:#2e7bb5;transform:scaleX(1.0640);transform-origin:0 0;">Parcial</div>
<div class="a" style="left:784.5px;top:472.5px;width:32.0px;height:17.5px;border:1px solid #a9bcd3;border-radius:3px;background:linear-gradient(#e8f0fa,#c9d9ee)"></div>
<div class="a" style="left:820px;top:472.5px;width:32px;height:17.5px;border:1px solid #a9bcd3;border-radius:3px;background:linear-gradient(#e8f0fa,#c9d9ee)"></div>
<div class="a" style="left:855px;top:472.5px;width:29px;height:17.5px;border:1px solid #a9bcd3;border-radius:3px;background:linear-gradient(#e8f0fa,#c9d9ee)"></div>
<svg class="a" style="left:794px;top:474.5px" width="14" height="14" viewBox="0 0 14 14"><path d="M2 7 L5.5 11 L12 3" fill="none" stroke="#4f8f88" stroke-width="2"/></svg>
<svg class="a" style="left:829px;top:475.5px" width="14" height="12" viewBox="0 0 14 12"><path d="M1 2.5 H5 L6.5 4 H12 V11 H1 Z" fill="#f5cf8a"/><path d="M1 5.5 H13 L12 11 H1 Z" fill="#f7dca3"/></svg>
<svg class="a" style="left:862px;top:474.0px" width="15" height="15" viewBox="0 0 15 15"><defs><radialGradient id="ib" cx="0.4" cy="0.35" r="0.7"><stop offset="0" stop-color="#3a8fc8"/><stop offset="1" stop-color="#0d3f73"/></radialGradient></defs><circle cx="7.5" cy="7.5" r="7.2" fill="url(#ib)"/><rect x="6.3" y="6" width="2.4" height="6" fill="#dff3ff"/><circle cx="7.5" cy="3.9" r="1.3" fill="#dff3ff"/></svg>
<div class="a" style="left:24px;top:492.25px;width:866px;height:23.25px;background:#d9d9d9"></div>
<div class="a" style="left:27px;top:496.25px;width:12px;height:12px;border:1.3px solid #4a4a4a;background:#fff"></div>
<div class="t" style="left:53.00px;top:499.45px;font-size:10.75px;color:#585858;transform:scaleX(0.9579);transform-origin:0 0;">DES001</div>
<div class="a" style="left:147px;top:492.25px;width:263px;height:23.25px;overflow:hidden">
<div class="t" style="left:1px;top:7.20px;font-size:10.75px;color:#5c5c5c;transform:scaleX(0.8824);transform-origin:0 0">DESARROLLO MECANICO</div>
</div>
<div class="t" style="left:432.50px;top:499.45px;font-size:10.75px;color:#585858;transform:scaleX(0.9824);transform-origin:0 0;">Un</div>
<div class="t" style="left:501.19px;top:499.45px;font-size:10.75px;color:#3a3a3a;font-weight:bold;transform:scaleX(1.1383);transform-origin:0 0;">1</div>
<div class="t" style="left:546.69px;top:499.45px;font-size:10.75px;color:#3a3a3a;font-weight:bold;transform:scaleX(1.1383);transform-origin:0 0;">0</div>
<div class="t" style="left:592.69px;top:499.45px;font-size:10.75px;color:#c43838;font-weight:bold;transform:scaleX(1.1383);transform-origin:0 0;">1</div>
<div class="t" style="left:608.50px;top:499.45px;font-size:10.75px;color:#585858;transform:scaleX(0.8800);transform-origin:0 0;">DESARROLLO</div>
<div class="t" style="left:702.00px;top:499.45px;font-size:10.75px;color:#d42a2a;transform:scaleX(1.0805);transform-origin:0 0;">Pendiente</div>
<div class="a" style="left:784.5px;top:495.75px;width:32.0px;height:17.5px;border:1px solid #a9bcd3;border-radius:3px;background:linear-gradient(#e8f0fa,#c9d9ee)"></div>
<div class="a" style="left:820px;top:495.75px;width:32px;height:17.5px;border:1px solid #a9bcd3;border-radius:3px;background:linear-gradient(#e8f0fa,#c9d9ee)"></div>
<div class="a" style="left:855px;top:495.75px;width:29px;height:17.5px;border:1px solid #a9bcd3;border-radius:3px;background:linear-gradient(#e8f0fa,#c9d9ee)"></div>
<svg class="a" style="left:794px;top:497.75px" width="14" height="14" viewBox="0 0 14 14"><path d="M2 7 L5.5 11 L12 3" fill="none" stroke="#4f8f88" stroke-width="2"/></svg>
<svg class="a" style="left:829px;top:498.75px" width="14" height="12" viewBox="0 0 14 12"><path d="M1 2.5 H5 L6.5 4 H12 V11 H1 Z" fill="#f5cf8a"/><path d="M1 5.5 H13 L12 11 H1 Z" fill="#f7dca3"/></svg>
<svg class="a" style="left:862px;top:497.25px" width="15" height="15" viewBox="0 0 15 15"><defs><radialGradient id="ib" cx="0.4" cy="0.35" r="0.7"><stop offset="0" stop-color="#3a8fc8"/><stop offset="1" stop-color="#0d3f73"/></radialGradient></defs><circle cx="7.5" cy="7.5" r="7.2" fill="url(#ib)"/><rect x="6.3" y="6" width="2.4" height="6" fill="#dff3ff"/><circle cx="7.5" cy="3.9" r="1.3" fill="#dff3ff"/></svg>
<div class="a" style="left:27px;top:519.5px;width:12px;height:12px;border:1.3px solid #4a4a4a;background:#fff"></div>
<div class="t" style="left:53.00px;top:522.70px;font-size:10.75px;color:#585858;transform:scaleX(0.9579);transform-origin:0 0;">DES003</div>
<div class="a" style="left:147px;top:515.50px;width:263px;height:23.25px;overflow:hidden">
<div class="t" style="left:1px;top:7.20px;font-size:10.75px;color:#5c5c5c;transform:scaleX(0.8825);transform-origin:0 0">DESARROLLO SISTEMAS</div>
</div>
<div class="t" style="left:432.50px;top:522.70px;font-size:10.75px;color:#585858;transform:scaleX(0.9824);transform-origin:0 0;">Un</div>
<div class="t" style="left:501.19px;top:522.70px;font-size:10.75px;color:#3a3a3a;font-weight:bold;transform:scaleX(1.1383);transform-origin:0 0;">1</div>
<div class="t" style="left:546.69px;top:522.70px;font-size:10.75px;color:#3a3a3a;font-weight:bold;transform:scaleX(1.1383);transform-origin:0 0;">0</div>
<div class="t" style="left:592.69px;top:522.70px;font-size:10.75px;color:#c43838;font-weight:bold;transform:scaleX(1.1383);transform-origin:0 0;">1</div>
<div class="t" style="left:608.50px;top:522.70px;font-size:10.75px;color:#585858;transform:scaleX(0.8800);transform-origin:0 0;">SISTEMAS</div>
<div class="t" style="left:702.00px;top:522.70px;font-size:10.75px;color:#d42a2a;transform:scaleX(1.0805);transform-origin:0 0;">Pendiente</div>
<div class="a" style="left:784.5px;top:519.0px;width:32.0px;height:17.5px;border:1px solid #a9bcd3;border-radius:3px;background:linear-gradient(#e8f0fa,#c9d9ee)"></div>
<div class="a" style="left:820px;top:519.0px;width:32px;height:17.5px;border:1px solid #a9bcd3;border-radius:3px;background:linear-gradient(#e8f0fa,#c9d9ee)"></div>
<div class="a" style="left:855px;top:519.0px;width:29px;height:17.5px;border:1px solid #a9bcd3;border-radius:3px;background:linear-gradient(#e8f0fa,#c9d9ee)"></div>
<svg class="a" style="left:794px;top:521.0px" width="14" height="14" viewBox="0 0 14 14"><path d="M2 7 L5.5 11 L12 3" fill="none" stroke="#4f8f88" stroke-width="2"/></svg>
<svg class="a" style="left:829px;top:522.0px" width="14" height="12" viewBox="0 0 14 12"><path d="M1 2.5 H5 L6.5 4 H12 V11 H1 Z" fill="#f5cf8a"/><path d="M1 5.5 H13 L12 11 H1 Z" fill="#f7dca3"/></svg>
<svg class="a" style="left:862px;top:520.5px" width="15" height="15" viewBox="0 0 15 15"><defs><radialGradient id="ib" cx="0.4" cy="0.35" r="0.7"><stop offset="0" stop-color="#3a8fc8"/><stop offset="1" stop-color="#0d3f73"/></radialGradient></defs><circle cx="7.5" cy="7.5" r="7.2" fill="url(#ib)"/><rect x="6.3" y="6" width="2.4" height="6" fill="#dff3ff"/><circle cx="7.5" cy="3.9" r="1.3" fill="#dff3ff"/></svg>
<div class="a" style="left:24px;top:538.75px;width:866px;height:23.25px;background:#d9d9d9"></div>
<div class="a" style="left:27px;top:542.75px;width:12px;height:12px;border:1.3px solid #4a4a4a;background:#fff"></div>
<div class="t" style="left:53.00px;top:545.95px;font-size:10.75px;color:#585858;transform:scaleX(0.9579);transform-origin:0 0;">DES004</div>
<div class="a" style="left:147px;top:538.75px;width:263px;height:23.25px;overflow:hidden">
<div class="t" style="left:1px;top:7.20px;font-size:10.75px;color:#5c5c5c;transform:scaleX(0.8903);transform-origin:0 0">DESARROLLO TALLER</div>
</div>
<div class="t" style="left:432.50px;top:545.95px;font-size:10.75px;color:#585858;transform:scaleX(0.9824);transform-origin:0 0;">Un</div>
<div class="t" style="left:501.19px;top:545.95px;font-size:10.75px;color:#3a3a3a;font-weight:bold;transform:scaleX(1.1383);transform-origin:0 0;">1</div>
<div class="t" style="left:546.69px;top:545.95px;font-size:10.75px;color:#3a3a3a;font-weight:bold;transform:scaleX(1.1383);transform-origin:0 0;">0</div>
<div class="t" style="left:592.69px;top:545.95px;font-size:10.75px;color:#c43838;font-weight:bold;transform:scaleX(1.1383);transform-origin:0 0;">1</div>
<div class="t" style="left:608.50px;top:545.95px;font-size:10.75px;color:#585858;transform:scaleX(0.8976);transform-origin:0 0;">TALLER</div>
<div class="t" style="left:702.00px;top:545.95px;font-size:10.75px;color:#d42a2a;transform:scaleX(1.0805);transform-origin:0 0;">Pendiente</div>
<div class="a" style="left:784.5px;top:542.25px;width:32.0px;height:17.5px;border:1px solid #a9bcd3;border-radius:3px;background:linear-gradient(#e8f0fa,#c9d9ee)"></div>
<div class="a" style="left:820px;top:542.25px;width:32px;height:17.5px;border:1px solid #a9bcd3;border-radius:3px;background:linear-gradient(#e8f0fa,#c9d9ee)"></div>
<div class="a" style="left:855px;top:542.25px;width:29px;height:17.5px;border:1px solid #a9bcd3;border-radius:3px;background:linear-gradient(#e8f0fa,#c9d9ee)"></div>
<svg class="a" style="left:794px;top:544.25px" width="14" height="14" viewBox="0 0 14 14"><path d="M2 7 L5.5 11 L12 3" fill="none" stroke="#4f8f88" stroke-width="2"/></svg>
<svg class="a" style="left:829px;top:545.25px" width="14" height="12" viewBox="0 0 14 12"><path d="M1 2.5 H5 L6.5 4 H12 V11 H1 Z" fill="#f5cf8a"/><path d="M1 5.5 H13 L12 11 H1 Z" fill="#f7dca3"/></svg>
<svg class="a" style="left:862px;top:543.75px" width="15" height="15" viewBox="0 0 15 15"><defs><radialGradient id="ib" cx="0.4" cy="0.35" r="0.7"><stop offset="0" stop-color="#3a8fc8"/><stop offset="1" stop-color="#0d3f73"/></radialGradient></defs><circle cx="7.5" cy="7.5" r="7.2" fill="url(#ib)"/><rect x="6.3" y="6" width="2.4" height="6" fill="#dff3ff"/><circle cx="7.5" cy="3.9" r="1.3" fill="#dff3ff"/></svg>
</div>
<div class="a" style="left:891px;top:311px;width:13.5px;height:251px;background:#f7f7f7"></div>
<div class="a" style="left:891px;top:311px;width:13.5px;height:13.5px;background:#fff;border:1px solid #c8c8c8"></div>
<svg class="a" style="left:894px;top:315px" width="8" height="5" viewBox="0 0 8 5"><path d="M0 4.5 L4 0.5 L8 4.5 Z" fill="#666"/></svg>
<div class="a" style="left:891px;top:324px;width:13.5px;height:16.5px;background:#fff;border:1px solid #c8c8c8;border-top:2px solid #b9b9b9"></div>
<div class="a" style="left:891px;top:548px;width:13.5px;height:13.5px;background:#fff;border:1px solid #c8c8c8"></div>
<svg class="a" style="left:894px;top:553px" width="8" height="5" viewBox="0 0 8 5"><path d="M0 0.5 L4 4.5 L8 0.5 Z" fill="#666"/></svg>
<div class="a" style="left:16.5px;top:575px;width:870px;height:70px;background:#fce8da;border:1px solid #b9b2ad"></div>
<div class="a" style="left:17.5px;top:576px;width:869px;height:68px;overflow:hidden">
<div class="t" style="left:3.20px;top:1.77px;font-size:11.5px;color:#555;font-weight:bold;transform:scaleX(1.0028);transform-origin:0 0;">18/10/2023 - jcavero:</div>
<div class="t" style="left:115.40px;top:1.77px;font-size:11.5px;color:#5a5a5a;transform:scaleX(0.9828);transform-origin:0 0;"> Elimino: Notificación</div>
<div class="t" style="left:3.20px;top:29.77px;font-size:11.5px;color:#555;font-weight:bold;transform:scaleX(1.0028);transform-origin:0 0;">18/10/2023 - jcavero:</div>
<div class="t" style="left:115.40px;top:29.77px;font-size:11.5px;color:#5a5a5a;transform:scaleX(0.9676);transform-origin:0 0;"> Nuevo item: ZE50042L050000Z...</div>
<div class="t" style="left:3.20px;top:57.77px;font-size:11.5px;color:#555;font-weight:bold;transform:scaleX(1.0028);transform-origin:0 0;">08/05/2023 - jcavero:</div>
<div class="t" style="left:115.40px;top:57.77px;font-size:11.5px;color:#5a5a5a;transform:scaleX(0.9454);transform-origin:0 0;"> Nuevo item: DES004...</div>
<div class="a" style="left:0.5px;top:22px;width:331px;height:1.2px;background-image:linear-gradient(90deg,#6e6258 62%,transparent 62%);background-size:3.75px 1.2px"></div>
<div class="a" style="left:0.5px;top:50px;width:331px;height:1.2px;background-image:linear-gradient(90deg,#6e6258 62%,transparent 62%);background-size:3.75px 1.2px"></div>
</div>
<div class="a" style="left:890px;top:575.5px;width:28.5px;height:69px;border:1.2px dotted #4d5a6a;border-radius:4px;background:linear-gradient(#dfe8f5,#b9cff0)"></div>
<svg class="a" style="left:895.5px;top:601.5px" width="16" height="16" viewBox="0 0 16 16"><defs><radialGradient id="ga" cx="0.4" cy="0.35" r="0.7"><stop offset="0" stop-color="#9be25a"/><stop offset="1" stop-color="#2a8d1c"/></radialGradient></defs><circle cx="8" cy="8" r="7.5" fill="url(#ga)" stroke="#2d7a1e" stroke-width="0.6"/><path d="M8 4 V12 M4 8 H12" stroke="#fff" stroke-width="2.6"/></svg>
<div class="a" style="left:17px;top:656px;width:62px;height:31px;background:#c9c9c9"></div>
<svg class="a" style="left:32px;top:656px" width="32" height="30" viewBox="0 0 32 30"><path d="M7.5 7.5 L23.5 23.5 M23.5 7.5 L7.5 23.5" stroke="#3c3c3c" stroke-width="7.4" stroke-linecap="round"/><path d="M7.5 7.5 L23.5 23.5 M23.5 7.5 L7.5 23.5" stroke="#5e5e5e" stroke-width="4.6" stroke-linecap="round"/></svg>
<div class="a" style="left:98px;top:655.5px;width:62px;height:30.5px;background:#e1e1e1;border:1px solid #a6a6a6;border-left-color:#cfcfcf;border-top-color:#b8b8b8"></div>
<svg class="a" style="left:119px;top:662px" width="20" height="18" viewBox="0 0 20 18"><rect x="2" y="6" width="13" height="7" rx="1.5" fill="#4d4d4d"/><rect x="5" y="3" width="7" height="4" fill="#777"/><rect x="5" y="10" width="8" height="6" fill="#fff" stroke="#666" stroke-width="0.8"/><circle cx="14" cy="5" r="4.2" fill="#2f9e77"/><path d="M12 5 L13.5 6.5 L16 3.8" fill="none" stroke="#fff" stroke-width="1.2"/></svg>
<div class="a" style="left:186px;top:655.5px;width:63px;height:30.5px;background:#e1e1e1;border:1px solid #a6a6a6;border-left-color:#cfcfcf;border-top-color:#b8b8b8"></div>
<svg class="a" style="left:207px;top:658px" width="22" height="24" viewBox="0 0 22 24"><rect x="2.5" y="1.5" width="15" height="19" rx="1" fill="#86b6e6" stroke="#5d8fc4" stroke-width="1"/><rect x="5" y="4" width="10" height="14" fill="#b5d5f2"/><path d="M8 6.5 h5" stroke="#f0f8ff" stroke-width="1.4"/><circle cx="11" cy="13" r="3.5" fill="#cfe6f8" stroke="#7fb0dc" stroke-width="1.3"/><path d="M1.5 3.5 h2 M1.5 6 h2 M1.5 8.5 h2 M1.5 11 h2 M1.5 13.5 h2 M1.5 16 h2 M1.5 18.5 h2" stroke="#4a6a8a" stroke-width="0.9"/><circle cx="17.5" cy="19" r="2.4" fill="#c9b07a"/></svg>
<div class="a" style="left:291px;top:651px;width:1px;height:39px;background:#d0d0d0"></div>
<div class="a" style="left:316px;top:655.5px;width:118px;height:30.5px;background:#e1e1e1;border:1px solid #a6a6a6;border-left-color:#cfcfcf;border-top-color:#b8b8b8"></div>
<svg class="a" style="left:363px;top:659px" width="24" height="24" viewBox="0 0 24 24"><defs><radialGradient id="gb" cx="0.4" cy="0.35" r="0.7"><stop offset="0" stop-color="#a6e35a"/><stop offset="1" stop-color="#2a8d1c"/></radialGradient></defs><circle cx="12" cy="12" r="11" fill="url(#gb)" stroke="#1f5e14" stroke-width="1.2"/><path d="M12 5.5 V18.5 M5.5 12 H18.5" stroke="#f2fbe8" stroke-width="3.6"/></svg>
<div class="a" style="left:478px;top:651px;width:1px;height:39px;background:#d0d0d0"></div>
<div class="a" style="left:503px;top:657px;width:118px;height:30px;background:#c9c9c9"></div>
<svg class="a" style="left:550px;top:660px" width="24" height="24" viewBox="0 0 24 24"><circle cx="12" cy="12" r="11" fill="#3b3b3b"/><rect x="6" y="8" width="12" height="8.5" fill="none" stroke="#e8e8e8" stroke-width="1.1"/><path d="M6 8 L12 13 L18 8 M6 16.5 L10.5 12 M18 16.5 L13.5 12" fill="none" stroke="#e8e8e8" stroke-width="1"/></svg>
<div class="a" style="left:631px;top:657px;width:118px;height:30px;background:#c9c9c9"></div>
<svg class="a" style="left:678px;top:660px" width="24" height="24" viewBox="0 0 24 24"><defs><linearGradient id="cb" x1="0" y1="0" x2="1" y2="1"><stop offset="0" stop-color="#f2f2f2"/><stop offset="1" stop-color="#8e8e8e"/></linearGradient><linearGradient id="cb2" x1="0" y1="0" x2="0" y2="1"><stop offset="0" stop-color="#9a9a9a"/><stop offset="1" stop-color="#6e6e6e"/></linearGradient></defs><path d="M3 5 L12 2.5 L21 5.5 L20 15 L12 21.5 L4 16 Z" fill="url(#cb)"/><path d="M14 8 L21 5.5 L20 15 L12 21.5 Z" fill="url(#cb2)" opacity="0.8"/></svg>
<div class="a" style="left:771px;top:651px;width:1px;height:39px;background:#d0d0d0"></div>
<div class="a" style="left:799px;top:657px;width:118.5px;height:30px;background:#e1e1e1;border:1px solid #a6a6a6;border-left-color:#cfcfcf;border-top-color:#b8b8b8"></div>
<svg class="a" style="left:846px;top:660px" width="24" height="24" viewBox="0 0 24 24"><defs><radialGradient id="gr" cx="0.4" cy="0.35" r="0.7"><stop offset="0" stop-color="#f04a3a"/><stop offset="1" stop-color="#a20c0c"/></radialGradient></defs><circle cx="12" cy="12" r="11" fill="url(#gr)" stroke="#6e0a0a" stroke-width="1"/><path d="M8 8 L16 16 M16 8 L8 16" stroke="#fff" stroke-width="3"/></svg>
<div class="a" style="left:1272px;top:0px;width:8px;height:715px;background:#1f1f1f"></div>
<div class="a" style="left:1276px;top:44px;width:4px;height:31px;background:#3a3a3a;border-radius:2px 0 0 2px"></div>
<div class="a" style="left:1276.5px;top:52px;width:2.5px;height:14.5px;background:#4fb27a;border-radius:1px"></div>
<div class="a" style="left:0px;top:712px;width:1280px;height:3px;background:#262626"></div></body></html>
